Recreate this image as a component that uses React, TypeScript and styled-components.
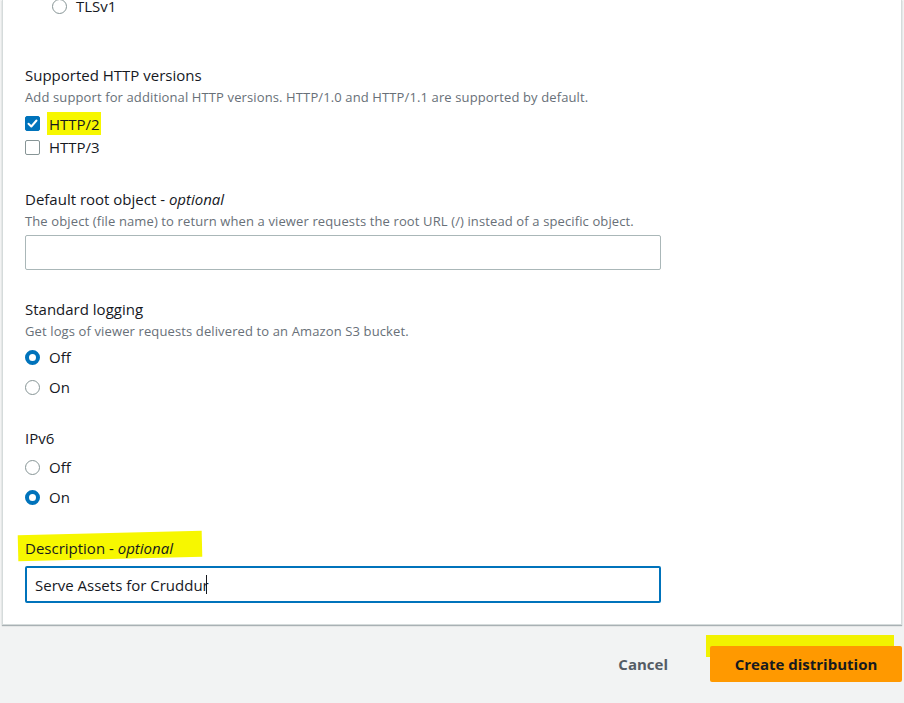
import React from "react";
import styled, { createGlobalStyle } from "styled-components";

const Global = createGlobalStyle`
  html, body { margin: 0; padding: 0; background: #f2f3f3; }
  body { font-family: "Open Sans", "Noto Sans", sans-serif; color: #16191f; }
  * { box-sizing: border-box; }
`;

const Page = styled.div`
  width: 904px;
  height: 703px;
  overflow: hidden;
  background: #f2f3f3;
  display: flex;
  flex-direction: column;
`;

const Panel = styled.div`
  margin: 0 2px 0 2px;
  background: #fff;
  border: 1px solid #d5dbdb;
  border-top: none;
  box-shadow: 0 1px 1px rgba(0, 28, 36, 0.3);
  padding: 0 20px 21px 22px;
  display: flex;
  flex-direction: column;
`;

const Section = styled.div<{ $top: number }>`
  margin-top: ${(p) => p.$top}px;
  display: flex;
  flex-direction: column;
`;

const Label = styled.div`
  position: relative;
  font-size: 15px;
  line-height: 22px;
  color: #16191f;
  em { font-style: italic; }
`;

const Highlight = styled.span`
  position: relative;
  z-index: 0;
  &::before {
    content: "";
    position: absolute;
    z-index: -1;
    left: -7px;
    right: -29px;
    top: -5px;
    bottom: -1px;
    background: #f7f700;
    transform: rotate(-1.4deg);
  }
`;

const Hint = styled.div`
  margin-top: 2px;
  font-size: 13px;
  line-height: 18px;
  color: #687078;
  letter-spacing: 0.12px;
`;

const Options = styled.div<{ $top: number; $indent?: number }>`
  margin-top: ${(p) => p.$top}px;
  margin-left: ${(p) => p.$indent ?? 0}px;
  display: flex;
  flex-direction: column;
`;

const OptionRow = styled.div<{ $h: number }>`
  height: ${(p) => p.$h}px;
  display: flex;
  align-items: center;
  gap: 9px;
  font-size: 15px;
  color: #16191f;
`;

const RadioDot = styled.span<{ $on?: boolean }>`
  width: 15px;
  height: 15px;
  border-radius: 50%;
  flex: none;
  background: #fff;
  border: ${(p) => (p.$on ? "4.5px solid #0073bb" : "1px solid #879596")};
`;

const Check = styled.span<{ $on?: boolean }>`
  width: 15px;
  height: 15px;
  border-radius: 2px;
  flex: none;
  display: flex;
  align-items: center;
  justify-content: center;
  background: ${(p) => (p.$on ? "#0073bb" : "#fff")};
  border: 1px solid ${(p) => (p.$on ? "#0073bb" : "#879596")};
`;

const OptText = styled.span<{ $mark?: boolean }>`
  background: ${(p) => (p.$mark ? "#f7f700" : "transparent")};
  padding: ${(p) => (p.$mark ? "3px 1px 2px 2px" : "0")};
  margin-left: ${(p) => (p.$mark ? "-2px" : "0")};
  line-height: 18px;
`;

const Input = styled.div<{ $focus?: boolean; $top: number }>`
  margin-top: ${(p) => p.$top}px;
  width: 636px;
  height: ${(p) => (p.$focus ? 37 : 35)}px;
  border: ${(p) => (p.$focus ? "2px solid #0073bb" : "1px solid #aab7b8")};
  border-radius: 2px;
  padding: 0 8px;
  display: flex;
  align-items: center;
  font-size: 15px;
  color: #16191f;
`;

const Caret = styled.span`
  display: inline-block;
  width: 1px;
  height: 19px;
  background: #16191f;
  margin-left: -3px;
`;

const Footer = styled.div`
  display: flex;
  justify-content: flex-end;
  align-items: center;
  gap: 42px;
  padding: 21px 2px 0 0;
`;

const LinkButton = styled.button`
  border: none;
  background: transparent;
  font-family: inherit;
  font-size: 15px;
  font-weight: 700;
  color: #545b64;
  padding: 0;
  cursor: pointer;
`;

const PrimaryWrap = styled.div`
  position: relative;
  &::before {
    content: "";
    position: absolute;
    left: -4px;
    right: 8px;
    top: -11px;
    height: 22px;
    background: #f2f200;
  }
`;

const PrimaryButton = styled.button`
  position: relative;
  width: 192px;
  height: 36px;
  border: none;
  border-radius: 2px;
  background: #ff9900;
  font-family: inherit;
  font-size: 15px;
  font-weight: 700;
  color: #16191f;
  cursor: pointer;
`;

const CheckMark = () => (
  <svg width="11" height="11" viewBox="0 0 11 11">
    <path d="M1.5 5.8 L4.3 8.5 L9.5 2.5" fill="none" stroke="#fff" strokeWidth="2" strokeLinecap="round" strokeLinejoin="round" />
  </svg>
);

export default function App() {
  return (
    <>
      <Global />
      <Page>
        <Panel>
          <Options $top={-6} $indent={27}>
            <OptionRow $h={24}>
              <RadioDot />
              <span>TLSv1</span>
            </OptionRow>
          </Options>

          <Section $top={46}>
            <Label>Supported HTTP versions</Label>
            <Hint>Add support for additional HTTP versions. HTTP/1.0 and HTTP/1.1 are supported by default.</Hint>
            <Options $top={5}>
              <OptionRow $h={24}>
                <Check $on>
                  <CheckMark />
                </Check>
                <OptText $mark>HTTP/2</OptText>
              </OptionRow>
              <OptionRow $h={24}>
                <Check />
                <OptText>HTTP/3</OptText>
              </OptionRow>
            </Options>
          </Section>

          <Section $top={29}>
            <Label>
              Default root object - <em>optional</em>
            </Label>
            <Hint>
              The object (file name) to return when a viewer requests the root URL (/) instead of a specific object.
            </Hint>
            <Input $top={5} />
          </Section>

          <Section $top={28}>
            <Label>Standard logging</Label>
            <Hint>Get logs of viewer requests delivered to an Amazon S3 bucket.</Hint>
            <Options $top={2}>
              <OptionRow $h={30}>
                <RadioDot $on />
                <span>Off</span>
              </OptionRow>
              <OptionRow $h={30}>
                <RadioDot />
                <span>On</span>
              </OptionRow>
            </Options>
          </Section>

          <Section $top={25}>
            <Label>IPv6</Label>
            <Options $top={3}>
              <OptionRow $h={30}>
                <RadioDot />
                <span>Off</span>
              </OptionRow>
              <OptionRow $h={30}>
                <RadioDot $on />
                <span>On</span>
              </OptionRow>
            </Options>
          </Section>

          <Section $top={25}>
            <Label>
              <Highlight>
                Description - <em>optional</em>
              </Highlight>
            </Label>
            <Input $top={7} $focus>
              Serve Assets for Cruddur
              <Caret />
            </Input>
          </Section>
        </Panel>

        <Footer>
          <LinkButton>Cancel</LinkButton>
          <PrimaryWrap>
            <PrimaryButton>Create distribution</PrimaryButton>
          </PrimaryWrap>
        </Footer>
      </Page>
    </>
  );
}
